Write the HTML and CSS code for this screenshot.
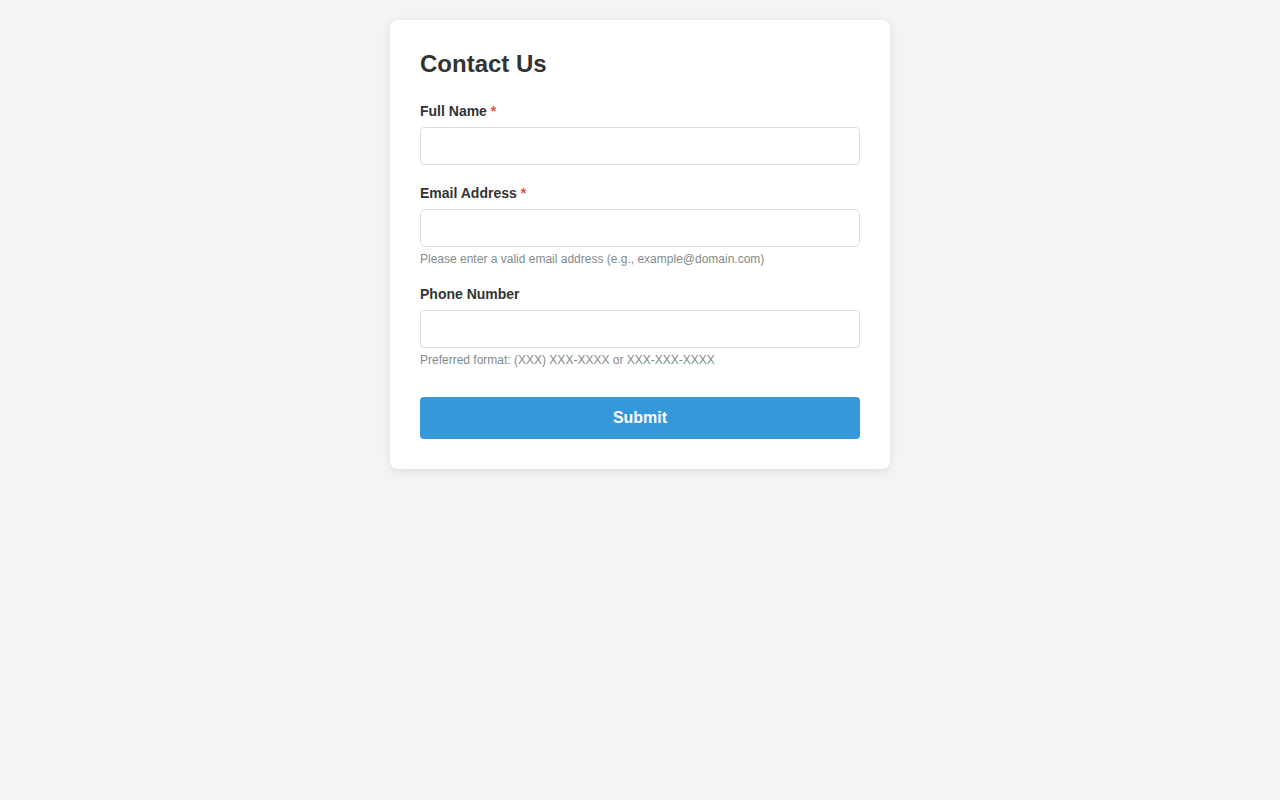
FILE: index.html
```html
<!DOCTYPE html>
<html lang="en">
<head>
<meta charset="utf-8">
<title>Contact Us</title>
<link rel="stylesheet" href="styles.css">
</head>
<body>
<div class="card">
  <h2 class="title">Contact Us</h2>
  <form class="form">
    <div class="group">
      <label class="label" for="name">Full Name <span class="req">*</span></label>
      <input class="input" id="name" type="text">
    </div>
    <div class="group">
      <label class="label" for="email">Email Address <span class="req">*</span></label>
      <input class="input" id="email" type="email">
      <div class="hint">Please enter a valid email address (e.g., example@domain.com)</div>
    </div>
    <div class="group">
      <label class="label" for="phone">Phone Number</label>
      <input class="input" id="phone" type="tel">
      <div class="hint">Preferred format: (XXX) XXX-XXXX or XXX-XXX-XXXX</div>
    </div>
    <button class="submit" type="button">Submit</button>
  </form>
</div>
</body>
</html>
```
FILE: styles.css
```css
html, body {
  margin: 0;
  background: #f4f4f4;
}
body {
  padding: 20px;
  font-family: "Liberation Sans", Arial, sans-serif;
  color: #333;
}
.card {
  box-sizing: border-box;
  width: 500px;
  margin: 0 auto;
  background: #fff;
  border-radius: 8px;
  padding: 30px;
  box-shadow: 0 2px 10px rgba(0, 0, 0, 0.1);
}
.title {
  margin: 0 0 25px;
  font-size: 24px;
  line-height: 28px;
  font-weight: bold;
  color: #333;
}
.form {
  display: flex;
  flex-direction: column;
}
.group {
  display: flex;
  flex-direction: column;
  margin-bottom: 20px;
}
.label {
  font-size: 14px;
  line-height: 16px;
  font-weight: bold;
  color: #333;
  margin-bottom: 8px;
}
.req {
  color: #e74c3c;
}
.input {
  box-sizing: border-box;
  width: 100%;
  height: 38px;
  margin: 0;
  padding: 10px;
  border: 1px solid #ddd;
  border-radius: 4px;
  font-family: inherit;
  font-size: 14px;
  background: #fff;
  outline: none;
}
.hint {
  margin-top: 5px;
  font-size: 12px;
  line-height: 14px;
  color: #7f8c8d;
}
.submit {
  margin-top: 10px;
  height: 42px;
  border: none;
  border-radius: 4px;
  background: #3498db;
  color: #fff;
  font-family: inherit;
  font-size: 16px;
  font-weight: bold;
  cursor: pointer;
}
```
